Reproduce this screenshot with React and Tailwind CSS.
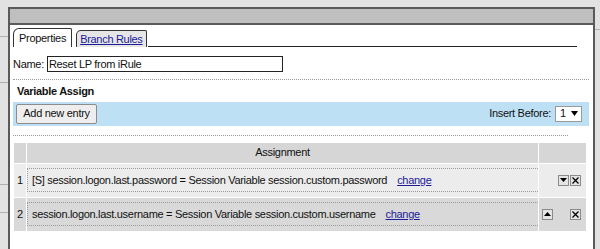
import React from "react";

function DownBtn() {
  return (
    <span className="inline-flex h-[11px] w-[11px] items-center justify-center border border-[#8a8a8a] bg-[#e4e4e4]">
      <svg width="7" height="4" viewBox="0 0 7 4"><path d="M0 0h7L3.5 4z" fill="#000" /></svg>
    </span>
  );
}

function UpBtn() {
  return (
    <span className="inline-flex h-[11px] w-[11px] items-center justify-center border border-[#8a8a8a] bg-[#e4e4e4]">
      <svg width="7" height="4" viewBox="0 0 7 4"><path d="M0 4h7L3.5 0z" fill="#000" /></svg>
    </span>
  );
}

function DelBtn() {
  return (
    <span className="inline-flex h-[11px] w-[11px] items-center justify-center border border-[#8a8a8a] bg-[#e4e4e4]">
      <svg width="7" height="7" viewBox="0 0 7 7"><path d="M0.5 0.5l6 6M6.5 0.5l-6 6" stroke="#000" strokeWidth="1.3" /></svg>
    </span>
  );
}

function App() {
  const rows = [
    { n: 1, text: "[S] session.logon.last.password = Session Variable session.custom.password", bg: "bg-[#ececec]", up: false, down: true },
    { n: 2, text: "session.logon.last.username = Session Variable session.custom.username", bg: "bg-[#d9d9d9]", up: true, down: false },
  ];

  return (
    <div className="flex h-[249px] w-[600px] overflow-hidden bg-[#e2e2e2] text-[11px] tracking-[-0.3px] text-[#111]" style={{ fontFamily: '"Liberation Sans", Arial, sans-serif' }}>
      {/* page behind the dialog */}
      <div className="flex w-[8px] shrink-0 flex-col overflow-hidden text-[11px] leading-none">
        <div className="mt-[36px] h-[2px] border-t border-[#b0b0b0]" />
        <div className="mt-[44px] h-[2px] border-t border-[#b0b0b0]" />
        <div className="mt-[100px] h-[2px] border-t border-[#b0b0b0]" />
        <div className="mt-[26px] h-[2px] border-t border-[#b0b0b0]" />
      </div>

      {/* dialog */}
      <div className="mt-[7px] flex w-[587px] shrink-0 flex-col border-x-2 border-t-2 border-[#5a5a5a] bg-white">
        <div className="h-[16px] border-b-2 border-[#5a5a5a] bg-[#bfbfbf]" />

        <div className="flex flex-col pl-[3px] pr-[4px]">
          {/* tabs */}
          <div className="mt-[3px] mr-[12px] flex items-end">
            <div className="flex h-[19px] items-center whitespace-nowrap rounded-tl-[6px] rounded-tr-[2px] border-x border-t border-[#333] bg-white px-[5px]">Properties</div>
            <div className="ml-[4px] flex h-[17px] items-center whitespace-nowrap rounded-tl-[5px] rounded-tr-[2px] border-x border-t border-[#333] bg-[#e6e6e6] px-[3px] text-[#1a1a9a] underline">Branch Rules</div>
            <div className="ml-[1px] flex-1 border-b border-[#222]" />
          </div>

          {/* name */}
          <div className="mt-[9px] flex items-center">
            <span className="mr-[3px]">Name:</span>
            <div className="flex h-[16px] w-[236px] items-center border border-[#222] px-[1px]">Reset LP from iRule</div>
          </div>

          <div className="mt-[6px] border-t border-dotted border-[#9a9a9a]" />

          <div className="mt-[4px] pl-[4px] text-[11px] font-bold leading-[14px]">Variable Assign</div>

          {/* action bar */}
          <div className="mt-[4px] flex h-[24px] items-center justify-between bg-[#bde0f5] pl-[3px] pr-[7px]">
            <button className="flex h-[20px] w-[81px] items-center justify-center rounded-[2px] border border-[#8c8c8c] bg-[#eeeeee]">Add new entry</button>
            <div className="flex items-center">
              <span className="mr-[4px]">Insert Before:</span>
              <div className="flex h-[16px] w-[27px] items-center justify-between border border-[#9a9a9a] bg-white pl-[4px] pr-[3px]">
                <span>1</span>
                <svg width="7" height="5" viewBox="0 0 7 5"><path d="M0 0h7L3.5 5z" fill="#000" /></svg>
              </div>
            </div>
          </div>

          <div className="mt-[9px] mr-[21px] border-t border-dotted border-[#9a9a9a]" />

          {/* table */}
          <div className="mt-[7px] mr-[3px] ml-[1px] flex flex-col">
            <div className="flex h-[20px] bg-[#d6d6d6]">
              <div className="w-[13px] border-r border-white" />
              <div className="flex w-[512px] items-center justify-center border-r border-white">Assignment</div>
              <div className="flex-1" />
            </div>
            {rows.map((r) => (
              <div key={r.n} className={`mt-[1px] flex h-[33px] ${r.bg}`}>
                <div className="flex w-[13px] items-center justify-center border-r border-white">{r.n}</div>
                <div className="flex w-[512px] items-center border-r border-white">
                  <div className="flex h-[24px] w-full items-center border-y border-l border-dotted border-[#9a9a9a] pl-[4px]">
                    <span>{r.text}</span>
                    <span className="ml-[10px] text-[#1a1a9a] underline">change</span>
                  </div>
                </div>
                <div className="flex flex-1 items-center pl-[3px] pr-[5px]">
                  {r.up ? <UpBtn /> : <span className="w-[11px]" />}
                  <span className="flex-1" />
                  {r.down && <DownBtn />}
                  <span className="ml-[1px]"><DelBtn /></span>
                </div>
              </div>
            ))}
          </div>
        </div>
      </div>

      <div className="flex-1">
        <div className="mt-[29px] border-t border-[#b0b0b0]" />
      </div>
    </div>
  );
}

export default App;
